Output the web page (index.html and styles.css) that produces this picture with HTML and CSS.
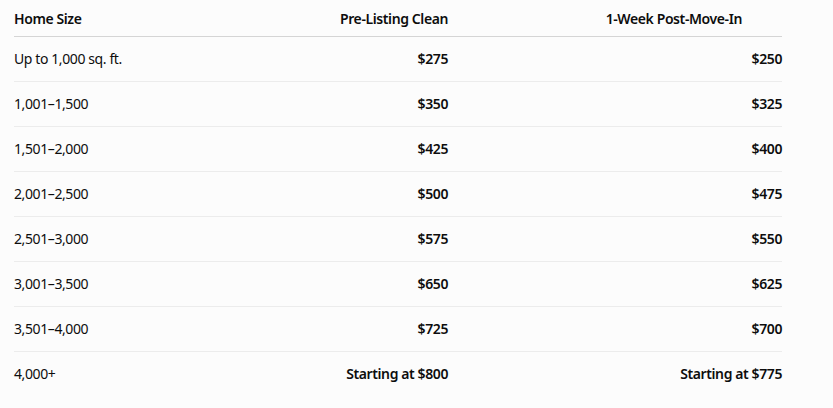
FILE: index.html
```html
<!DOCTYPE html>
<html lang="en">

<head>
    <meta charset="utf-8">
    <meta name="viewport" content="width=device-width, initial-scale=1.0">
    <title>Cleaning Prices</title>
    <link rel="stylesheet" href="styles.css">
</head>

<body>
    <main>
        <table class="prices">
            <thead>
                <tr>
                    <th class="size">Home Size</th>
                    <th class="num pre">Pre-Listing Clean</th>
                    <th class="num post">1-Week Post-Move-In</th>
                </tr>
            </thead>
            <tbody>
                <tr>
                    <td>Up to 1,000 sq. ft.</td>
                    <td class="num">$275</td>
                    <td class="num">$250</td>
                </tr>
                <tr>
                    <td>1,001–1,500</td>
                    <td class="num">$350</td>
                    <td class="num">$325</td>
                </tr>
                <tr>
                    <td>1,501–2,000</td>
                    <td class="num">$425</td>
                    <td class="num">$400</td>
                </tr>
                <tr>
                    <td>2,001–2,500</td>
                    <td class="num">$500</td>
                    <td class="num">$475</td>
                </tr>
                <tr>
                    <td>2,501–3,000</td>
                    <td class="num">$575</td>
                    <td class="num">$550</td>
                </tr>
                <tr>
                    <td>3,001–3,500</td>
                    <td class="num">$650</td>
                    <td class="num">$625</td>
                </tr>
                <tr>
                    <td>3,501–4,000</td>
                    <td class="num">$725</td>
                    <td class="num">$700</td>
                </tr>
                <tr>
                    <td>4,000+</td>
                    <td class="num">Starting at $800</td>
                    <td class="num">Starting at $775</td>
                </tr>
            </tbody>
        </table>
    </main>
</body>

</html>
```
FILE: styles.css
```css
body {
    margin: 0;
    background-color: #fcfcfc;
    color: #0d0d0d;
    font-family: "Noto Sans", "Open Sans", sans-serif;
    font-size: 14px;
    letter-spacing: -0.4px;
}

main {
    padding: 0 14px;
}

.prices {
    width: 768px;
    border-collapse: collapse;
}

.prices th {
    font-weight: 600;
    text-align: left;
    line-height: 20px;
    padding: 9px 0 7px;
    border-bottom: 1px solid #d5d5d5;
}

.prices td {
    line-height: 20px;
    padding: 12px 0;
    border-bottom: 1px solid #ececec;
}

.prices tbody tr:last-child td {
    border-bottom: none;
}

.prices .num {
    text-align: right;
}

.prices td.num {
    font-weight: 600;
}

.size {
    width: 200px;
}

.pre {
    width: 234px;
}

.prices th.post {
    padding-right: 40px;
}
```
